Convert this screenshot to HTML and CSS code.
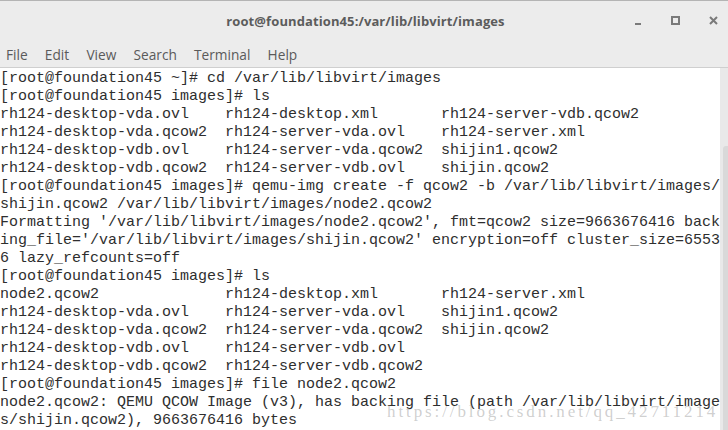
FILE: index.html
```html
<!DOCTYPE html>
<html>
<head>
<meta charset="utf-8">
<link rel="stylesheet" href="styles.css">
</head>
<body>
<div class="window">
  <header class="header">
    <div class="titlebar">
      <div class="title">root@foundation45:/var/lib/libvirt/images</div>
      <div class="controls">
        <svg class="ctl ctl-min" width="8" height="8" viewBox="0 0 8 8"><rect x="1" y="6" width="6" height="2" fill="#7a7a7a"/></svg>
        <svg class="ctl ctl-max" width="9" height="9" viewBox="0 0 9 9"><rect x="1" y="1" width="7" height="7" fill="none" stroke="#7a7a7a" stroke-width="2"/></svg>
        <svg class="ctl ctl-close" width="9" height="9" viewBox="0 0 9 9"><path d="M1 1 L8 8 M8 1 L1 8" stroke="#7a7a7a" stroke-width="2"/></svg>
      </div>
    </div>
    <nav class="menubar">
      <span>File</span><span>Edit</span><span>View</span><span>Search</span><span>Terminal</span><span>Help</span>
    </nav>
  </header>
  <main class="body">
    <pre class="term">[root@foundation45 ~]# cd /var/lib/libvirt/images
[root@foundation45 images]# ls
rh124-desktop-vda.ovl    rh124-desktop.xml       rh124-server-vdb.qcow2
rh124-desktop-vda.qcow2  rh124-server-vda.ovl    rh124-server.xml
rh124-desktop-vdb.ovl    rh124-server-vda.qcow2  shijin1.qcow2
rh124-desktop-vdb.qcow2  rh124-server-vdb.ovl    shijin.qcow2
[root@foundation45 images]# qemu-img create -f qcow2 -b /var/lib/libvirt/images/
shijin.qcow2 /var/lib/libvirt/images/node2.qcow2
Formatting '/var/lib/libvirt/images/node2.qcow2', fmt=qcow2 size=9663676416 back
ing_file='/var/lib/libvirt/images/shijin.qcow2' encryption=off cluster_size=6553
6 lazy_refcounts=off
[root@foundation45 images]# ls
node2.qcow2              rh124-desktop.xml       rh124-server.xml
rh124-desktop-vda.ovl    rh124-server-vda.ovl    shijin1.qcow2
rh124-desktop-vda.qcow2  rh124-server-vda.qcow2  shijin.qcow2
rh124-desktop-vdb.ovl    rh124-server-vdb.ovl
rh124-desktop-vdb.qcow2  rh124-server-vdb.qcow2
[root@foundation45 images]# file node2.qcow2
node2.qcow2: QEMU QCOW Image (v3), has backing file (path /var/lib/libvirt/image
s/shijin.qcow2), 9663676416 bytes</pre>
    <div class="scrollbar"><div class="thumb"></div></div>
    <div class="watermark">https://blog.csdn.net/qq_42711214</div>
  </main>
</div>
</body>
</html>
```

FILE: styles.css
```css
html, body {
  margin: 0;
  padding: 0;
  width: 728px;
  height: 430px;
  overflow: hidden;
  background: #ffffff;
}
.window {
  display: flex;
  flex-direction: column;
  height: 430px;
}
.header {
  background: #ececec;
  border-top: 1px solid #b4b4b4;
  border-bottom: 1px solid #cfcfcf;
  height: 66px;
  display: flex;
  flex-direction: column;
  font-family: "Open Sans", "DejaVu Sans", sans-serif;
  color: #5c5c5c;
}
.titlebar {
  position: relative;
  height: 40px;
  display: flex;
  align-items: center;
  justify-content: center;
}
.title {
  font-size: 13px;
  font-weight: 700;
  letter-spacing: 0.1px;
  margin-left: 3px;
}
.controls {
  position: absolute;
  top: 0;
  right: 0;
  height: 40px;
}
.ctl {
  position: absolute;
  display: block;
}
.ctl-min { left: -94px; top: 16px; }
.ctl-max { left: -57px; top: 15px; }
.ctl-close { left: -19px; top: 15px; }
.menubar {
  display: flex;
  gap: 17.2px;
  padding-left: 6px;
  height: 26px;
  align-items: center;
  font-size: 13.7px;
  color: #5a5a5a;
}
.body {
  position: relative;
  flex: 1;
  display: flex;
  min-height: 0;
}
.term {
  flex: 1;
  margin: 0;
  padding: 2px 0 0 0;
  font-family: "Liberation Mono", "Courier New", monospace;
  font-size: 15px;
  line-height: 18px;
  color: #2e2e2e;
  white-space: pre;
  overflow: hidden;
}
.scrollbar {
  width: 8px;
  background: #e9e9e9;
  display: flex;
  flex-direction: column;
  justify-content: flex-end;
  align-items: flex-end;
}
.thumb {
  width: 5px;
  height: 284px;
  background: #d9d9d9;
  border-radius: 3px 0 0 0;
}
.watermark {
  position: absolute;
  left: 387px;
  top: 334px;
  font-family: "Liberation Serif", "Times New Roman", serif;
  font-size: 17px;
  letter-spacing: 2.9px;
  color: rgba(140, 140, 140, 0.42);
  white-space: nowrap;
}
```
